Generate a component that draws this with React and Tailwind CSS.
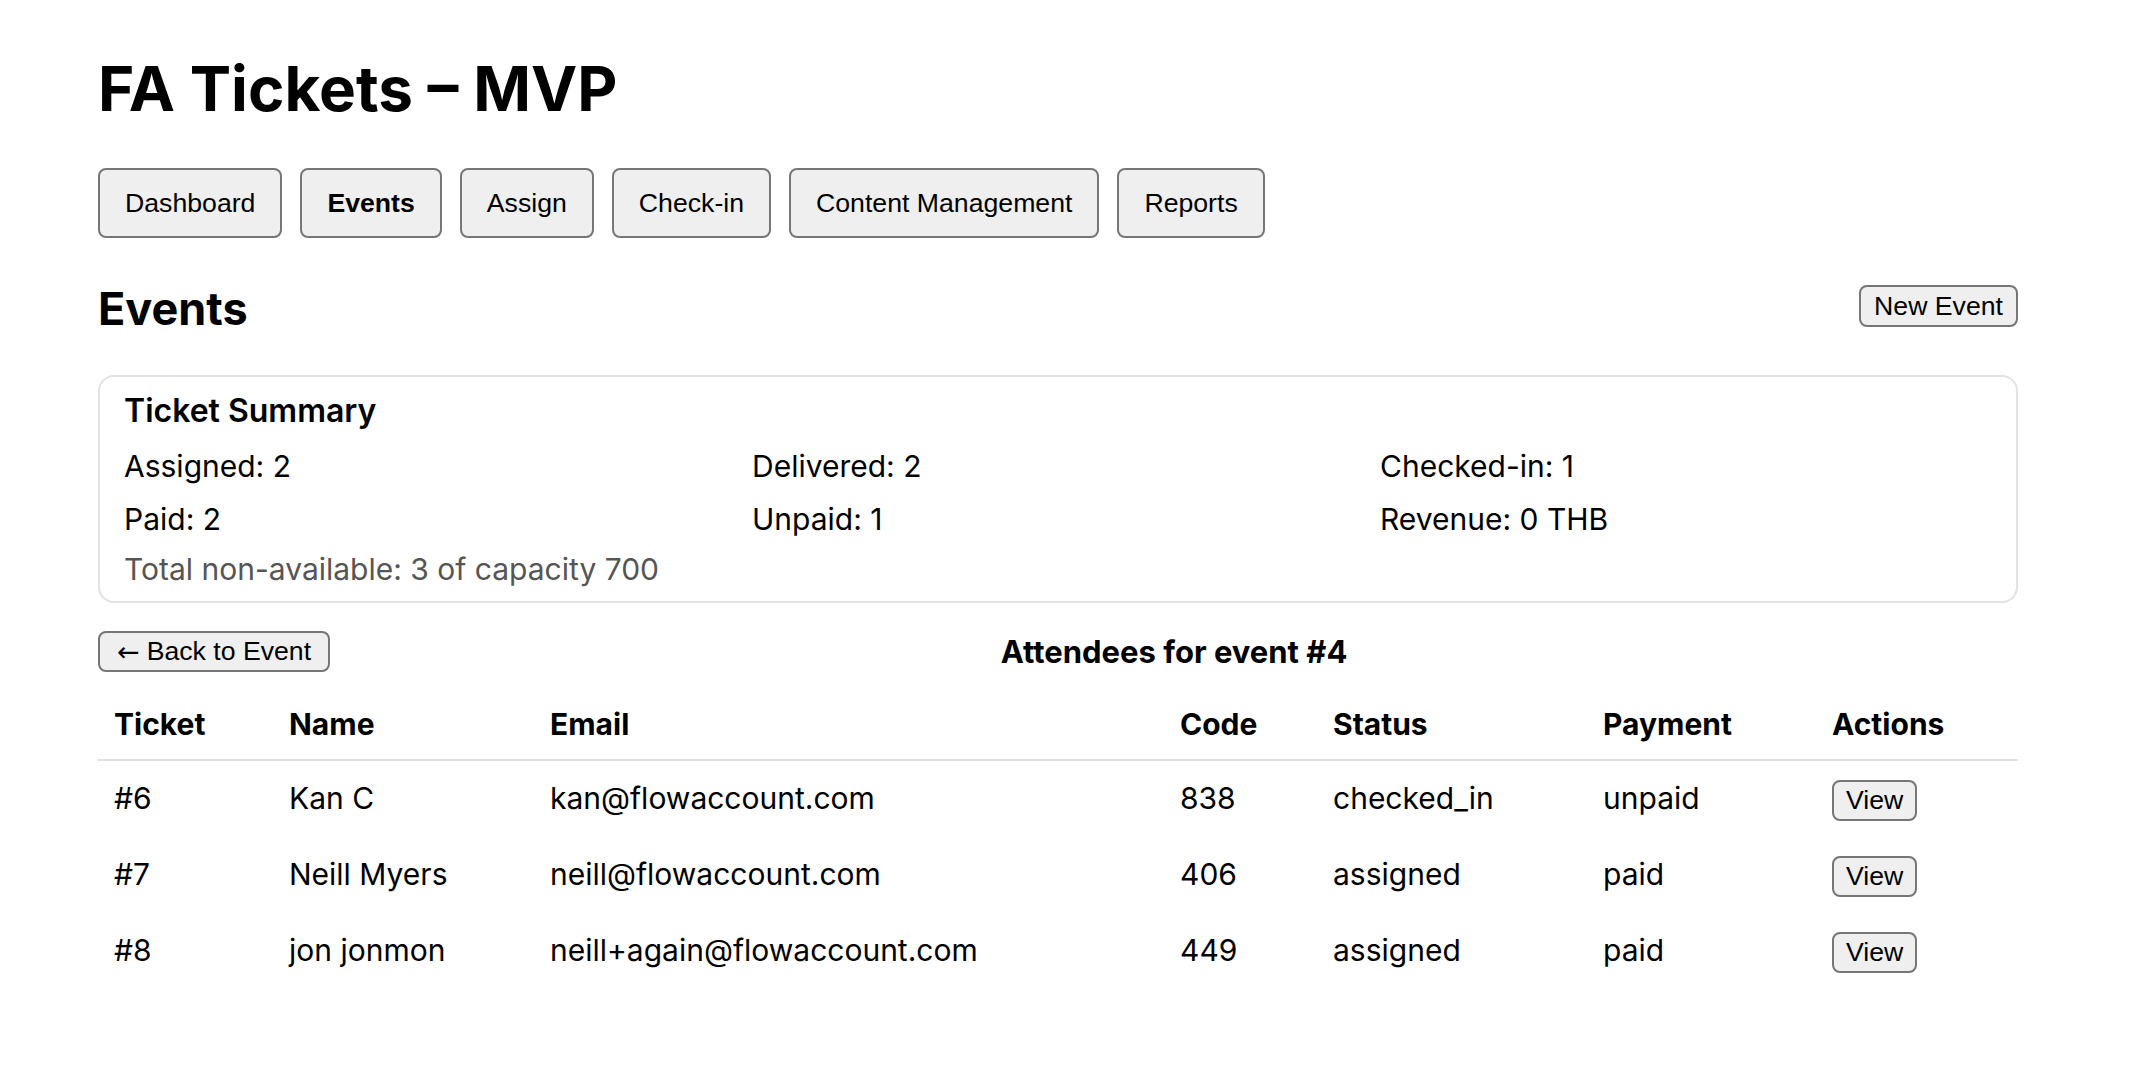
import React from 'react';

const navItems = ['Dashboard', 'Events', 'Assign', 'Check-in', 'Content Management', 'Reports'];

const summary = [
  'Assigned: 2',
  'Delivered: 2',
  'Checked-in: 1',
  'Paid: 2',
  'Unpaid: 1',
  'Revenue: 0 THB',
];

const attendees = [
  { ticket: '#6', name: 'Kan C', email: 'kan@flowaccount.com', code: '838', status: 'checked_in', payment: 'unpaid' },
  { ticket: '#7', name: 'Neill Myers', email: 'neill@flowaccount.com', code: '406', status: 'assigned', payment: 'paid' },
  { ticket: '#8', name: 'jon jonmon', email: 'neill+again@flowaccount.com', code: '449', status: 'assigned', payment: 'paid' },
];

const columns = [
  { label: 'Ticket', w: 'w-[175px]' },
  { label: 'Name', w: 'w-[261px]' },
  { label: 'Email', w: 'w-[630px]' },
  { label: 'Code', w: 'w-[153px]' },
  { label: 'Status', w: 'w-[270px]' },
  { label: 'Payment', w: 'w-[229px]' },
  { label: 'Actions', w: 'w-[202px]' },
];

const btn =
  "font-['Liberation_Sans',Arial,sans-serif] text-[26.67px] leading-[31px] text-black bg-[#efefef] border-2 border-[#767676] rounded-[8px]";

const App = () => {
  return (
    <div className="min-h-screen bg-white text-black font-['Inter',sans-serif]">
      <div className="ml-[98px] w-[1920px] pt-[51px] pb-[40px]">
        <h1 className="text-[62px] leading-[75px] font-bold">FA Tickets – MVP</h1>

        {/* top navigation */}
        <nav className="mt-[42px] flex gap-[18px]">
          {navItems.map((item) => (
            <button
              key={item}
              className={`${btn} h-[70px] px-[25px] ${item === 'Events' ? 'font-bold' : 'font-normal'}`}
            >
              {item}
            </button>
          ))}
        </nav>

        <div className="mt-[44px] h-[53px] flex items-start justify-between">
          <h2 className="text-[45px] leading-[53px] font-bold">Events</h2>
          <button className={`${btn} mt-[3px] h-[42px] px-[13px]`}>New Event</button>
        </div>

        {/* Ticket summary card */}
        <section className="mt-[40px] border-2 border-[#e2e2e2] rounded-[16px] px-[24px] pt-[14px] pb-[10px]">
          <h3 className="text-[32px] leading-[40px] font-semibold">Ticket Summary</h3>
          <div className="mt-[13px] grid grid-cols-3 gap-x-[16px] gap-y-[9px] text-[30px] leading-[44px]">
            {summary.map((s) => (
              <div key={s}>{s}</div>
            ))}
          </div>
          <p className="mt-[6px] text-[30px] leading-[44px] text-[#555]">
            Total non-available: 3 of capacity 700
          </p>
        </section>

        <div className="mt-[28px] h-[41px] flex items-center justify-between">
          <button className={`${btn} h-[41px] px-[17px] flex items-center gap-[7px]`}>
            <span className="font-['DejaVu_Sans',sans-serif] text-[27px] leading-[31px]">←</span>
            <span>Back to Event</span>
          </button>
          <h3 className="text-[31px] leading-[40px] font-bold">Attendees for event #4</h3>
          <div />
        </div>

        {/* Attendees table */}
        <table className="mt-[17px] w-full table-fixed border-collapse text-[30px]">
          <thead>
            <tr className="border-b-2 border-[#e0e0e0]">
              {columns.map((c) => (
                <th key={c.label} className={`${c.w} h-[71px] px-[16px] text-left font-bold align-middle`}>
                  {c.label}
                </th>
              ))}
            </tr>
          </thead>
          <tbody>
            {attendees.map((a) => (
              <tr key={a.ticket}>
                <td className="h-[76px] px-[16px] align-middle">{a.ticket}</td>
                <td className="px-[16px] align-middle">{a.name}</td>
                <td className="px-[16px] align-middle">{a.email}</td>
                <td className="px-[16px] align-middle">{a.code}</td>
                <td className="px-[16px] align-middle">{a.status}</td>
                <td className="px-[16px] align-middle">{a.payment}</td>
                <td className="px-[16px] align-middle">
                  <button className={`${btn} h-[41px] px-[12px]`}>View</button>
                </td>
              </tr>
            ))}
          </tbody>
        </table>
      </div>
    </div>
  );
};

export default App;
